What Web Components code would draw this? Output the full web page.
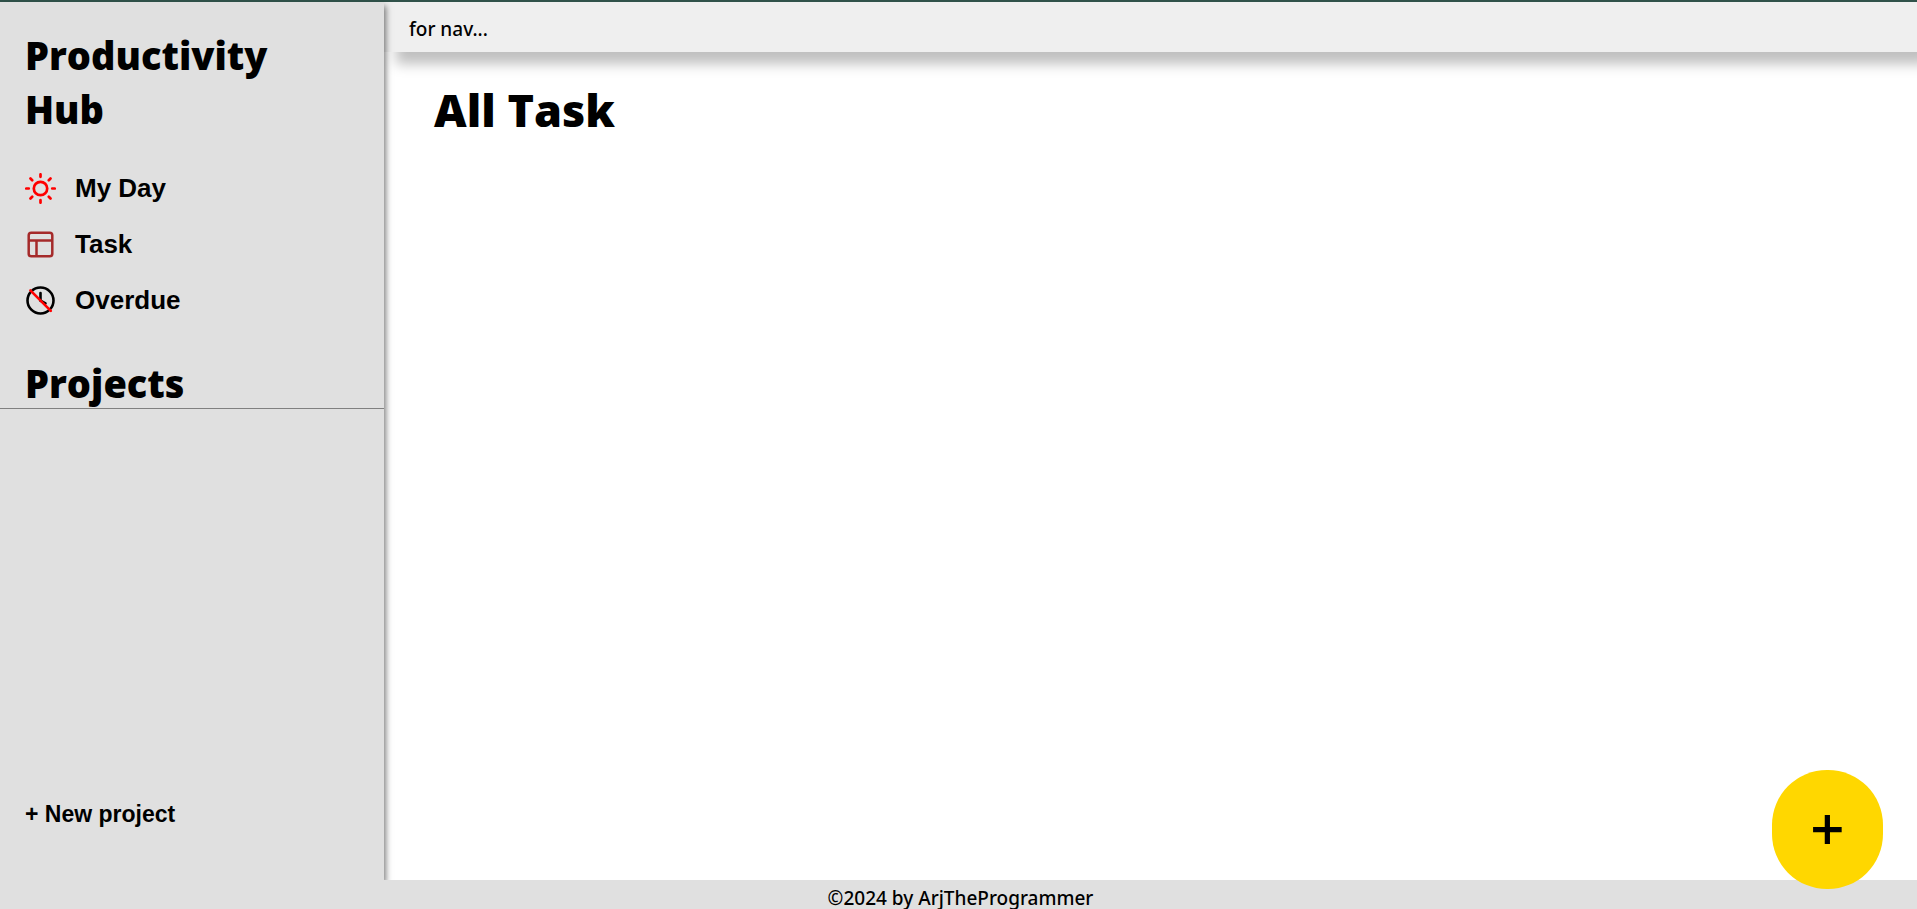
<!DOCTYPE html>
<html lang="en">
<head>
<meta charset="utf-8">
<title>Productivity Hub</title>
<style>
  html, body { height: 100%; margin: 0; }
  body { font-family: "Noto Sans", "Open Sans", sans-serif; color: #000; background: #fff; }
</style>
</head>
<body>
<productivity-app></productivity-app>
<script>
const define = (name, html) => {
  const template = document.createElement('template');
  template.innerHTML = html;
  customElements.define(name, class extends HTMLElement {
    constructor() {
      super();
      this.attachShadow({ mode: 'open' }).append(template.content.cloneNode(true));
    }
  });
};

define('nav-link', `
  <style>
    :host { display: block; }
    a { display: flex; align-items: center; gap: 19px; height: 56px; color: inherit; text-decoration: none;
        font: bold 26px/32px "Liberation Sans", Arial, sans-serif; }
    ::slotted(svg) { display: block; width: 31px; height: 31px; flex: none; }
  </style>
  <a href="#"><slot name="icon"></slot><slot></slot></a>`);

define('side-bar', `
  <style>
    :host { display: flex; flex-direction: column; box-sizing: border-box; background: #e0e0e0;
            box-shadow: 2px 4px 6px rgba(0,0,0,.5); position: relative; z-index: 2; }
    h1, h2 { margin: 0; font: 800 38px/54px "Open Sans", sans-serif; }
    h1 { padding: 26px 100px 24px 25px; }
    nav { padding-left: 25px; }
    h2 { margin-top: 30px; padding-left: 25px; border-bottom: 1px solid #808080; line-height: 50px; }
    .list { flex: 1; }
    button { align-self: flex-start; margin: 0 0 52px 25px; padding: 0; border: 0; background: none; color: inherit;
             font: bold 23px/28px "Liberation Sans", Arial, sans-serif; }
  </style>
  <h1>Productivity Hub</h1>
  <nav>
    <nav-link>
      <svg slot="icon" viewBox="0 0 31 31" fill="none" stroke="#f00" stroke-width="2.7" stroke-linecap="round">
        <circle cx="15.5" cy="15.5" r="6.7"/>
        <path d="M15.5 1.3v2.5M15.5 27.2v2.5M1.3 15.5h2.5M27.2 15.5h2.5M5.5 5.5l1.7 1.7M23.8 23.8l1.7 1.7M25.5 5.5l-1.7 1.7M7.2 23.8l-1.7 1.7"/>
      </svg>My Day</nav-link>
    <nav-link>
      <svg slot="icon" viewBox="0 0 31 31" fill="none" stroke="#a52a2a" stroke-width="2.5">
        <rect x="3.7" y="3.7" width="23.6" height="23.6" rx="2.6"/>
        <path d="M3.7 11.5h23.6M11.5 11.5v15.9"/>
      </svg>Task</nav-link>
    <nav-link>
      <svg slot="icon" viewBox="0 0 31 31" fill="none" stroke="#000" stroke-width="2.6" stroke-linecap="round">
        <circle cx="15.5" cy="15.5" r="13"/>
        <path d="M15.5 8v7.7l5 2.7"/>
        <path stroke="#f00" d="M5.4 5.4l20.4 20.4"/>
      </svg>Overdue</nav-link>
  </nav>
  <h2>Projects</h2>
  <div class="list"></div>
  <button type="button">+ New project</button>`);

define('top-bar', `
  <style>
    :host { display: block; padding: 14px 25px 10px; background: #efefef; font: 500 19px/26px "Noto Sans", sans-serif;
            box-shadow: 12px 12px 12px rgba(0,0,0,.25); }
  </style>
  <slot></slot>`);

define('task-board', `
  <style>
    :host { display: block; padding: 26px 50px; }
    h1 { margin: 0; font: 800 45px/64px "Open Sans", sans-serif; }
  </style>
  <h1><slot></slot></h1>`);

define('page-footer', `
  <style>
    :host { display: block; padding: 7px 0 0 4px; background: #e0e0e0; text-align: center;
            font: 500 19px/22px "Noto Sans", sans-serif; position: relative; z-index: 3; }
  </style>
  <slot></slot>`);

define('add-button', `
  <style>
    :host { display: block; position: fixed; right: 34px; bottom: 20px; z-index: 4; }
    button { display: block; width: 111px; height: 119px; padding: 0 0 4px; border: 0; border-radius: 55px;
             background: #ffd700; color: #000; font: 600 60px/114px "Open Sans", sans-serif; }
  </style>
  <button type="button" aria-label="Add task"><slot></slot></button>`);

define('productivity-app', `
  <style>
    :host { display: flex; flex-direction: column; box-sizing: border-box; height: 100%; border-top: 2px solid #30524a; }
    .body { flex: 1; min-height: 0; display: grid; grid-template-columns: 384px 1fr; }
    main { min-width: 0; overflow: hidden; }
  </style>
  <div class="body">
    <side-bar></side-bar>
    <main>
      <top-bar>for nav...</top-bar>
      <task-board>All Task</task-board>
    </main>
  </div>
  <page-footer>©2024 by ArjTheProgrammer</page-footer>
  <add-button>+</add-button>`);
</script>
</body>
</html>
